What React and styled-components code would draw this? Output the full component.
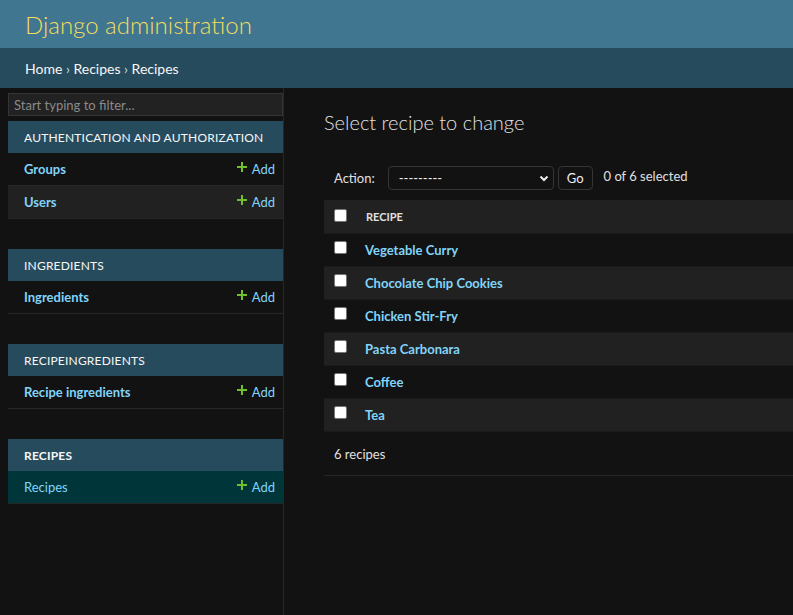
import React from 'react';
import styled, { createGlobalStyle } from 'styled-components';

const GlobalStyle = createGlobalStyle`
  html, body {
    margin: 0;
    padding: 0;
    background: #121212;
    color: #eeeeee;
    font-family: Lato, "Liberation Sans", sans-serif;
    font-size: 14px;
    overflow: hidden;
  }
  * { box-sizing: border-box; }
`;

const Header = styled.div`
  height: 48px;
  background: #417690;
  padding: 0 25px;
  display: flex;
  align-items: center;
`;

const Branding = styled.h1`
  margin: 0;
  font-size: 24px;
  font-weight: 300;
  color: #f5dd5d;
`;

const Breadcrumbs = styled.div`
  height: 40px;
  background: #264b5d;
  padding: 0 25px;
  display: flex;
  align-items: center;
  font-size: 14px;
  color: #c4dce8;

  a {
    color: #f7f7f7;
    text-decoration: none;
  }
  span {
    color: #f7f7f7;
  }
`;

const Main = styled.div`
  display: flex;
  min-height: 527px;
`;

const Toggle = styled.div`
  flex: 0 0 8px;
  background: #121212;
`;

const Sidebar = styled.nav`
  flex: 0 0 276px;
  width: 276px;
  min-width: 0;
  overflow: hidden;
  border-right: 1px solid #272727;
  padding-top: 5px;
`;

const Filter = styled.input`
  display: block;
  width: 100%;
  height: 23px;
  margin: 0 0 5px;
  padding: 2px 5px;
  background: #222;
  border: 1px solid #353535;
  color: #eee;
  font-family: inherit;
  font-size: 13px;

  &::placeholder {
    color: #8a8a8a;
  }
`;

const Module = styled.div`
  margin-bottom: 30px;
`;

const Caption = styled.div`
  height: 32px;
  display: flex;
  align-items: center;
  padding: 0 16px;
  background: #264b5d;
  color: #f7f7f7;
  font-size: 12px;
  letter-spacing: 0.2px;
  white-space: nowrap;
  text-transform: uppercase;
  font-weight: ${(p) => (p.$current ? 700 : 400)};
`;

const ModelRow = styled.div`
  height: 33px;
  display: flex;
  align-items: center;
  justify-content: space-between;
  padding: 0 8px 0 16px;
  border-bottom: 1px solid #272727;
  background: ${(p) => (p.$current ? '#00363a' : p.$alt ? '#212121' : '#121212')};
`;

const ModelLink = styled.a`
  color: #81d4fa;
  font-size: 13px;
  font-weight: ${(p) => (p.$current ? 400 : 700)};
  text-decoration: none;
`;

const AddLink = styled.a`
  display: flex;
  align-items: center;
  gap: 5px;
  color: #81d4fa;
  font-size: 13px;
  text-decoration: none;
`;

const Content = styled.div`
  flex: 1;
  min-width: 0;
  padding: 20px 0 20px 40px;
`;

const Title = styled.h1`
  margin: 0 0 24px;
  font-size: 20px;
  font-weight: 300;
  color: #e0e0e0;
  line-height: 28px;
`;

const Actions = styled.div`
  display: flex;
  align-items: center;
  padding: 0 10px;
  height: 36px;
  font-size: 13px;
  color: #e0e0e0;
`;

const Select = styled.div`
  width: 166px;
  height: 24px;
  margin-left: 13px;
  border: 1px solid #353535;
  border-radius: 4px;
  display: flex;
  align-items: center;
  justify-content: space-between;
  padding: 0 4px 0 10px;
  color: #eee;
  font-size: 13px;
`;

const GoButton = styled.button`
  height: 24px;
  margin-left: 4px;
  padding: 0 8px;
  background: #121212;
  border: 1px solid #353535;
  border-radius: 4px;
  color: #eee;
  font-family: inherit;
  font-size: 13px;
`;

const Counter = styled.span`
  margin-left: 11px;
  margin-top: -4px;
`;

const Table = styled.div`
  margin-top: 4px;
`;

const Row = styled.div`
  height: ${(p) => (p.$head ? '34px' : '33px')};
  display: flex;
  align-items: center;
  padding-left: 10px;
  background: ${(p) => (p.$alt ? '#212121' : '#121212')};
  border-bottom: 1px solid #1a1a1a;
`;

const Box = styled.span`
  width: 13px;
  height: 13px;
  flex: none;
  background: #fff;
  border: 1px solid #767676;
  border-radius: 2px;
  margin-right: 18px;
  margin-top: ${(p) => (p.$head ? '-2px' : '-6px')};
`;

const HeadLabel = styled.span`
  font-size: 11px;
  font-weight: 700;
  color: #e0e0e0;
  margin-left: 1px;
`;

const RecipeLink = styled.a`
  color: #81d4fa;
  font-size: 13px;
  font-weight: 700;
  text-decoration: none;
`;

const Footer = styled.div`
  height: 44px;
  padding-left: 10px;
  display: flex;
  align-items: center;
  font-size: 13px;
  color: #e0e0e0;
  border-bottom: 1px solid #272727;
`;

const Plus = () => (
  <svg width="10" height="10" viewBox="0 0 10 10" style={{ marginTop: -5 }}>
    <path d="M4 0h2v4h4v2H6v4H4V6H0V4h4z" fill="#70bf2b" />
  </svg>
);

const Chevron = () => (
  <svg width="10" height="10" viewBox="0 0 10 10">
    <path d="M1.5 3.5L5 7l3.5-3.5" stroke="#eee" strokeWidth="2" fill="none" />
  </svg>
);

const modules = [
  { name: 'Authentication and Authorization', models: ['Groups', 'Users'] },
  { name: 'Ingredients', models: ['Ingredients'] },
  { name: 'Recipeingredients', models: ['Recipe ingredients'] },
  { name: 'Recipes', models: ['Recipes'], current: true },
];

const recipes = [
  'Vegetable Curry',
  'Chocolate Chip Cookies',
  'Chicken Stir-Fry',
  'Pasta Carbonara',
  'Coffee',
  'Tea',
];

export default function App() {
  return (
    <>
      <GlobalStyle />
      <Header>
        <Branding>Django administration</Branding>
      </Header>
      <Breadcrumbs>
        <a href="#">Home</a>&nbsp;›&nbsp;<a href="#">Recipes</a>&nbsp;›&nbsp;<span>Recipes</span>
      </Breadcrumbs>
      <Main>
        <Toggle />
        <Sidebar>
          <Filter placeholder="Start typing to filter..." />
          {modules.map((m) => (
            <Module key={m.name}>
              <Caption $current={m.current}>{m.name}</Caption>
              {m.models.map((model, i) => (
                <ModelRow key={model} $alt={i % 2 === 1} $current={m.current}>
                  <ModelLink href="#" $current={m.current}>{model}</ModelLink>
                  <AddLink href="#">
                    <Plus />
                    Add
                  </AddLink>
                </ModelRow>
              ))}
            </Module>
          ))}
        </Sidebar>
        <Content>
          <Title>Select recipe to change</Title>
          <Actions>
            Action:
            <Select>
              ---------
              <Chevron />
            </Select>
            <GoButton>Go</GoButton>
            <Counter>0 of 6 selected</Counter>
          </Actions>
          <Table>
            <Row $alt $head>
              <Box $head />
              <HeadLabel>RECIPE</HeadLabel>
            </Row>
            {recipes.map((r, i) => (
              <Row key={r} $alt={i % 2 === 1}>
                <Box />
                <RecipeLink href="#">{r}</RecipeLink>
              </Row>
            ))}
          </Table>
          <Footer>6 recipes</Footer>
        </Content>
      </Main>
    </>
  );
}
